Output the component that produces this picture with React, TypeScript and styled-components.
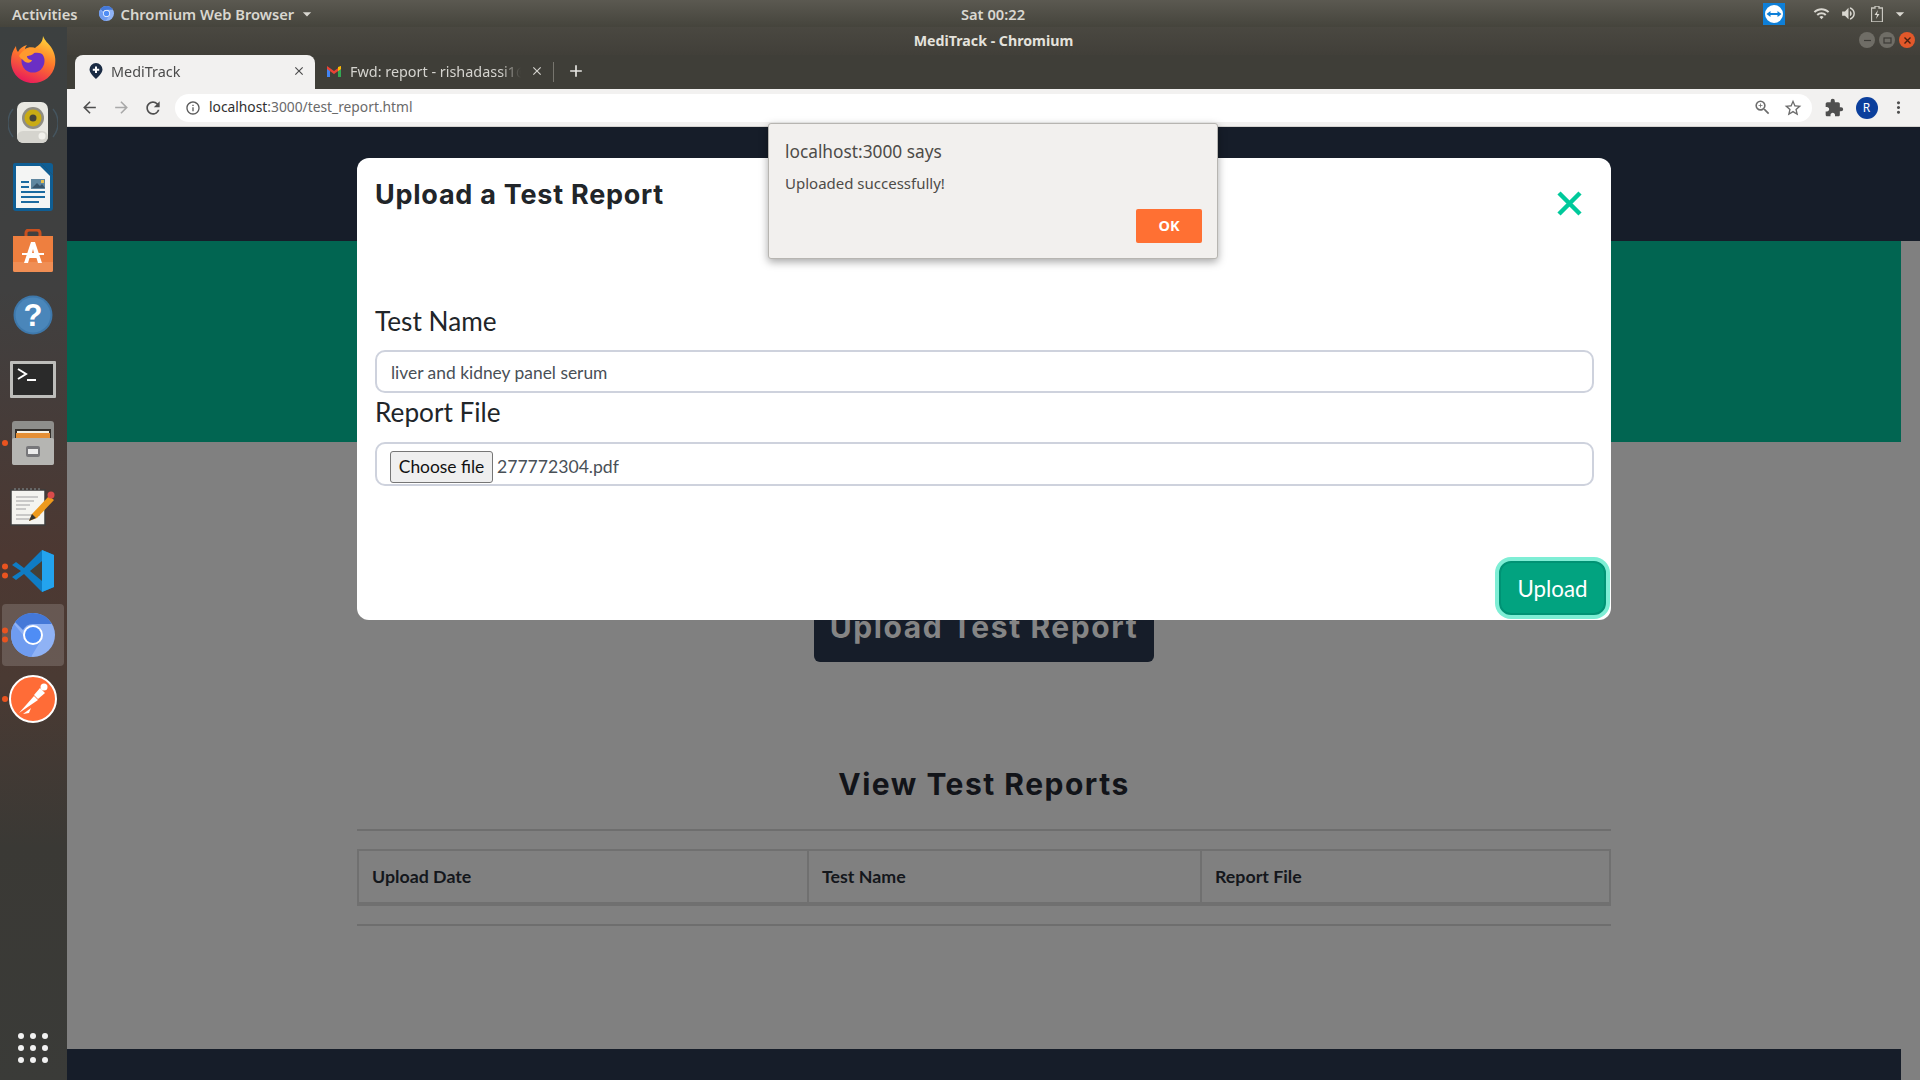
import styled, { createGlobalStyle } from "styled-components";
import {
  MdAdd,
  MdArrowBack,
  MdArrowDropDown,
  MdArrowForward,
  MdClose,
  MdExtension,
  MdInfoOutline,
  MdMoreVert,
  MdOutlineStarBorder,
  MdRefresh,
  MdVolumeUp,
  MdWifi,
  MdZoomIn,
} from "react-icons/md";

const GlobalStyle = createGlobalStyle`
  html, body, #root { margin: 0; height: 100%; }
  body { overflow: hidden; font-family: "Lato", sans-serif; }
  * { box-sizing: border-box; }
`;

const SYSTEM_FONT = `"Noto Sans", "Open Sans", sans-serif`;
const HEADING_FONT = `"Inter", "Open Sans", sans-serif`;

const Screen = styled.div`
  position: relative;
  width: 1920px;
  height: 1080px;
  display: flex;
  flex-direction: column;
  overflow: hidden;
`;

/* gnome top bar */
const TopBar = styled.div`
  height: 27px;
  flex: none;
  display: grid;
  grid-template-columns: 960px 66px 1fr;
  align-items: center;
  background: linear-gradient(#5b5951, #45443c);
  color: #d9d7d0;
  font: 600 14.7px ${SYSTEM_FONT};
`;

const TopLeft = styled.div`
  display: flex;
  align-items: center;
  padding-left: 12px;
  gap: 21px;
`;

const AppMenu = styled.span`
  display: flex;
  align-items: center;
  gap: 7px;
  & > svg:last-child { margin-left: -4px; }
`;

const Clock = styled.span`
  display: block;
  text-align: center;
  white-space: nowrap;
`;

const TopRight = styled.div`
  display: flex;
  align-items: center;
  justify-content: flex-end;
  padding-right: 10px;
`;

const TrayItem = styled.span<{ $gap: number }>`
  display: flex;
  margin-left: ${({ $gap }) => $gap}px;
`;

const Desktop = styled.div`
  flex: 1;
  display: flex;
  min-height: 0;
`;

/* dock */
const Dock = styled.nav`
  position: relative;
  width: 67px;
  flex: none;
  display: flex;
  flex-direction: column;
  background: linear-gradient(#3c4040 0%, #404040 25%, #4c3832 50%, #4a3a33 62%, #3a3935 78%, #3a3b38 100%);
`;

const DockSlot = styled.div<{ $active?: boolean }>`
  position: relative;
  height: 64px;
  padding-right: 1px;
  display: flex;
  align-items: center;
  justify-content: center;
  &::before {
    content: "";
    display: ${({ $active }) => ($active ? "block" : "none")};
    position: absolute;
    left: 2px;
    top: 1px;
    width: 62px;
    height: 62px;
    border-radius: 4px;
    background: rgba(255, 255, 255, 0.16);
  }
  & > svg { position: relative; }
`;

const RunDots = styled.div`
  position: absolute;
  left: 2px;
  top: 50%;
  transform: translateY(-50%);
  display: flex;
  flex-direction: column;
  gap: 3px;
`;

const RunDot = styled.i`
  display: block;
  width: 6px;
  height: 6px;
  border-radius: 50%;
  background: #e95420;
`;

const AppGrid = styled.div`
  position: absolute;
  left: 18px;
  bottom: 17px;
  display: grid;
  grid-template-columns: repeat(3, 6px);
  gap: 6px;
`;

const AppGridDot = styled.i`
  width: 6px;
  height: 6px;
  border-radius: 50%;
  background: #f2f2f2;
`;

/* browser */
const Browser = styled.div`
  flex: 1;
  min-width: 0;
  display: flex;
  flex-direction: column;
`;

const TitleBar = styled.div`
  position: relative;
  height: 28px;
  flex: none;
  padding-bottom: 2px;
  display: flex;
  align-items: center;
  justify-content: center;
  background: linear-gradient(#4a4841, #413f39);
  color: #e4e2dc;
  font: 700 14.2px ${SYSTEM_FONT};
`;

const WindowButtons = styled.div`
  position: absolute;
  right: 5px;
  top: 5px;
  display: flex;
  gap: 4px;
`;

const WindowButton = styled.span<{ $close?: boolean }>`
  width: 16px;
  height: 16px;
  border-radius: 50%;
  display: flex;
  align-items: center;
  justify-content: center;
  background: ${({ $close }) => ($close ? "#e2582a" : "#6f6d66")};
  color: ${({ $close }) => ($close ? "#4a2010" : "#3c3b36")};
`;

const TabStrip = styled.div`
  height: 34px;
  flex: none;
  display: flex;
  align-items: flex-end;
  background: #3f3e38;
  padding-left: 8px;
`;

const Tab = styled.div<{ $active?: boolean }>`
  width: ${({ $active }) => ($active ? "240px" : "238px")};
  height: 34px;
  display: flex;
  align-items: center;
  padding: 0 9px 2px ${({ $active }) => ($active ? "14px" : "12px")};
  gap: ${({ $active }) => ($active ? "8px" : "9px")};
  border-radius: 8px 8px 0 0;
  background: ${({ $active }) => ($active ? "#f2f1f0" : "transparent")};
  color: ${({ $active }) => ($active ? "#4b4b4b" : "#d5d4cf")};
  font: 400 14.4px ${SYSTEM_FONT};
`;

const TabTitle = styled.span`
  flex: 1;
  min-width: 0;
  overflow: hidden;
  white-space: nowrap;
  -webkit-mask-image: linear-gradient(90deg, #000 88%, transparent);
`;

const TabSeparator = styled.i`
  width: 1px;
  height: 20px;
  margin: 0 0 7px 0;
  background: #77756e;
`;

const NewTab = styled.span`
  width: 44px;
  height: 34px;
  padding-bottom: 2px;
  display: flex;
  align-items: center;
  justify-content: center;
  color: #e6e5e1;
`;

const Toolbar = styled.div`
  height: 38px;
  flex: none;
  display: flex;
  align-items: center;
  padding: 0 12px 0 6px;
  background: #f2f1f0;
  border-bottom: 1px solid #d5d3d0;
  color: #5a5a5a;
`;

const NavButton = styled.span<{ $muted?: boolean }>`
  width: 32px;
  display: flex;
  justify-content: center;
  color: ${({ $muted }) => ($muted ? "#a9a9a9" : "#4f4f4f")};
`;

const AddressBar = styled.div`
  width: 1637px;
  height: 28px;
  margin-left: 6px;
  padding: 0 9px 0 10px;
  display: flex;
  align-items: center;
  gap: 8px;
  border-radius: 14px;
  background: #fff;
  font: 400 13.8px ${SYSTEM_FONT};
`;

const UrlHost = styled.span`
  color: #2f2f2f;
`;

const UrlPath = styled.span`
  flex: 1;
  padding-bottom: 2px;
  color: #6a6a6a;
`;

const OmniIcons = styled.div`
  display: flex;
  align-items: center;
  gap: 11px;
  color: #6c6c6c;
`;

const ToolbarActions = styled.div`
  flex: 1;
  display: flex;
  align-items: center;
  justify-content: space-between;
  padding-left: 12px;
  color: #4f4f4f;
`;

const Avatar = styled.span`
  width: 22px;
  height: 22px;
  border-radius: 50%;
  display: flex;
  align-items: center;
  justify-content: center;
  background: #0b3f9c;
  color: #fff;
  font: 400 12px ${SYSTEM_FONT};
`;

/* page */
const Page = styled.main`
  position: relative;
  flex: 1;
  min-height: 0;
  display: flex;
  flex-direction: column;
  background: #808080;
  font-family: "Lato", sans-serif;
`;

const PageHeader = styled.header`
  height: 114px;
  flex: none;
  background: #161d29;
`;

const Hero = styled.section`
  width: 1834px;
  height: 201px;
  flex: none;
  background: #016551;
`;

const Content = styled.section`
  width: 1254px;
  margin-left: 290px;
  display: flex;
  flex-direction: column;
  align-items: center;
`;

const UploadTrigger = styled.button`
  width: 340px;
  height: 70px;
  margin-top: 150px;
  padding: 0;
  border: 0;
  border-radius: 6px;
  background: #161d29;
  color: #858585;
  font: 700 30px ${HEADING_FONT};
  letter-spacing: 1.6px;
`;

const SectionTitle = styled.h2`
  margin: 102px 0 0;
  height: 40px;
  color: #121419;
  font: 700 30px/40px ${HEADING_FONT};
  letter-spacing: 1.5px;
`;

const Rule = styled.hr<{ $gap: number }>`
  width: 100%;
  height: 2px;
  margin: ${({ $gap }) => $gap}px 0 0;
  border: 0;
  background: #6e6e6e;
`;

const ReportTable = styled.table`
  width: 100%;
  height: 57px;
  margin-top: 18px;
  table-layout: fixed;
  border-collapse: separate;
  border-spacing: 0;
  border: solid #707070;
  border-width: 2px 2px 4px;
`;

const HeaderCell = styled.th<{ $width?: number }>`
  width: ${({ $width }) => ($width ? `${$width}px` : "auto")};
  padding: 0 13px 2px;
  text-align: left;
  color: #14171c;
  font: 700 17.8px "Lato", sans-serif;
  border-right: 2px solid #707070;
  &:last-child { border-right: 0; }
`;

const PageFooter = styled.footer`
  width: 1834px;
  height: 31px;
  margin-top: auto;
  background: #161d29;
`;

/* modal */
const Modal = styled.div`
  position: absolute;
  left: 290px;
  top: 31px;
  width: 1254px;
  height: 462px;
  padding: 0 17px 0 18px;
  display: flex;
  flex-direction: column;
  border-radius: 12px;
  background: #fff;
`;

const ModalHeader = styled.div`
  display: flex;
  justify-content: space-between;
  align-items: flex-start;
  padding-top: 20px;
  height: 145px;
`;

const ModalTitle = styled.h3`
  margin: 0;
  color: #212529;
  font: 700 27px/34px ${HEADING_FONT};
  letter-spacing: 0.75px;
`;

const CloseIcon = styled.svg`
  margin: 13px 12px 0 0;
`;

const FieldLabel = styled.label<{ $top?: number; $gap: number }>`
  display: block;
  height: 36px;
  margin-top: ${({ $top }) => $top ?? 0}px;
  margin-bottom: ${({ $gap }) => $gap}px;
  color: #212529;
  font: 400 26.2px/36px "Lato", sans-serif;
`;

const TextField = styled.input`
  display: block;
  width: 100%;
  height: 43px;
  padding: 2px 14px 0;
  border: 2px solid #ced2dd;
  border-radius: 10px;
  outline: none;
  color: #495057;
  font: 400 17.4px "Lato", sans-serif;
`;

const FileField = styled.div`
  width: 100%;
  height: 44px;
  padding: 5px 13px 0;
  display: flex;
  align-items: center;
  gap: 4px;
  border: 2px solid #ced2dd;
  border-radius: 10px;
  color: #495057;
  font: 400 17.6px "Lato", sans-serif;
`;

const ChooseFile = styled.button`
  width: 103px;
  height: 32px;
  padding: 0;
  border: 1px solid #767676;
  border-radius: 3px;
  background: #efefef;
  color: #111;
  font: 400 17.4px "Lato", sans-serif;
`;

const SubmitButton = styled.button`
  width: 107px;
  height: 54px;
  margin: auto -12px 5px 0;
  padding: 1px 0 0;
  align-self: flex-end;
  border: 2px solid #009274;
  border-radius: 12px;
  background: #02a380;
  box-shadow: 0 0 0 4px #7eeed5;
  color: #fff;
  font: 400 22.3px "Lato", sans-serif;
`;

/* js alert */
const AlertBox = styled.div`
  position: absolute;
  left: 768px;
  top: 123px;
  width: 450px;
  height: 136px;
  padding: 16px 15px 15px 16px;
  display: flex;
  flex-direction: column;
  border: 1px solid #b7b5b1;
  border-radius: 3px;
  background: #f2f0ee;
  box-shadow: 0 3px 8px rgba(0, 0, 0, 0.35);
  color: #4d4b48;
  font-family: ${SYSTEM_FONT};
`;

const AlertTitle = styled.div`
  font-size: 17.3px;
  line-height: 24px;
`;

const AlertMessage = styled.div`
  margin-top: 8px;
  font-size: 15px;
  line-height: 22px;
`;

const AlertOk = styled.button`
  width: 66px;
  height: 34px;
  margin-top: auto;
  align-self: flex-end;
  padding: 0 0 2px;
  border: 0;
  border-radius: 2px;
  background: #ff7033;
  color: #fff;
  font: 700 14.5px ${SYSTEM_FONT};
`;

function Firefox() {
  return (
    <svg width="46" height="48" viewBox="0 0 46 48">
      <defs>
        <linearGradient id="ffa" x1="0.7" y1="0" x2="0.3" y2="1">
          <stop offset="0" stopColor="#ffd43a" />
          <stop offset="0.45" stopColor="#ff7a2a" />
          <stop offset="1" stopColor="#e8175d" />
        </linearGradient>
      </defs>
      <path d="M33 1c2 5 5 7 8 11 4 6 5 12 4 18-2 11-11 18-22 18C10 48 1 38 1 26 1 20 3 15 6 11c0 3 1 5 2 6 2-4 5-6 9-7-1 1-2 3-2 4 3-2 7-2 10-1 4-3 8-6 8-12z" fill="url(#ffa)" />
      <circle cx="23" cy="26" r="11.5" fill="#6b2fc4" />
      <path d="M9 21c3-6 10-9 16-8 5 1 9 4 10 8-3-3-7-4-11-3-1 2-5 3-7 3 0 3 3 4 5 4-1 4-7 3-9 0-1-1-3-2-4-4z" fill="#ff9a2e" />
    </svg>
  );
}

function Speaker() {
  return (
    <svg width="50" height="44" viewBox="0 0 50 44">
      <path d="M5 8a22 22 0 0 0 0 28M45 8a22 22 0 0 1 0 28" fill="none" stroke="#4d6a7d" strokeWidth="1.500" opacity="0.5" />
      <rect x="9" y="1" width="31" height="41" rx="7" fill="#e9e8e2" />
      <rect x="9" y="30" width="31" height="12" rx="6" fill="#d5d4ce" />
      <circle cx="25" cy="17" r="11" fill="#8f8d83" />
      <circle cx="25" cy="17" r="8.500" fill="#c9ab14" />
      <circle cx="25" cy="17" r="3.500" fill="#45433a" />
      <circle cx="34" cy="35" r="3.500" fill="#f2f1ec" />
    </svg>
  );
}

function Writer() {
  return (
    <svg width="40" height="48" viewBox="0 0 40 48">
      <path d="M2 0h26l12 12v33a3 3 0 0 1-3 3H3a3 3 0 0 1-3-3V2a2 2 0 0 1 2-2z" fill="#0f5e94" />
      <path d="M3 3h24l10 10v32H3z" fill="#f4f5f4" />
      <path d="M28 0h9a3 3 0 0 1 3 3v9z" fill="#0f5e94" />
      <path d="M8 18h8v2H8zM8 23h8v2H8zM8 28h24v2H8zM8 33h24v2H8zM8 38h18v2H8z" fill="#1b6aa0" />
      <rect x="18" y="16" width="14" height="10" fill="#5f87a0" />
      <path d="M19 25l5-5 3 3 2-2 3 4z" fill="#36546b" />
      <rect x="28" y="17" width="3" height="3" fill="#e7c04d" />
    </svg>
  );
}

function Store() {
  return (
    <svg width="42" height="44" viewBox="0 0 42 44">
      <path d="M14 10V4a3 3 0 0 1 3-3h8a3 3 0 0 1 3 3v6" fill="none" stroke="#c9501f" strokeWidth="3" />
      <path d="M1 7h40v34a2 2 0 0 1-2 2H3a2 2 0 0 1-2-2z" fill="#ee7f3f" />
      <path d="M1 33h40v8a2 2 0 0 1-2 2H3a2 2 0 0 1-2-2z" fill="#f08e54" />
      <path d="M19 13h4l7 21h-4l-1.500-5h-7L16 34h-4zM20 24h2l-1-4z" fill="#fff" />
      <rect x="10" y="24" width="22" height="2" fill="#fff" />
    </svg>
  );
}

function Help() {
  return (
    <svg width="40" height="40" viewBox="0 0 40 40">
      <circle cx="20" cy="20" r="19.500" fill="#3e78ab" />
      <circle cx="20" cy="20" r="17.500" fill="#4a86ba" />
      <text x="20" y="31" textAnchor="middle" fill="#fff" fontFamily="Liberation Sans, sans-serif" fontWeight="700" fontSize="31">?</text>
    </svg>
  );
}

function Terminal() {
  return (
    <svg width="46" height="37" viewBox="0 0 46 37">
      <rect width="46" height="37" rx="1" fill="#bdbdba" />
      <rect x="3" y="3" width="40" height="31" fill="#2a2a2a" />
      <path d="M8 8l8 5-8 5" fill="none" stroke="#fff" strokeWidth="2" />
      <path d="M17 19h9" stroke="#fff" strokeWidth="2" />
    </svg>
  );
}

function Files() {
  return (
    <svg width="42" height="44" viewBox="0 0 42 44">
      <rect width="42" height="44" rx="3" fill="#8e8e8b" />
      <rect x="3" y="8" width="36" height="12" fill="#34302c" />
      <rect x="5" y="10" width="32" height="2" fill="#f4f0e4" />
      <rect x="4" y="12" width="34" height="5" fill="#e58f35" />
      <rect x="0" y="17" width="42" height="27" rx="2" fill="#b5b5b2" />
      <rect x="14" y="25" width="14" height="11" rx="2" fill="#77777a" />
      <rect x="16" y="28" width="10" height="5" fill="#ececec" />
    </svg>
  );
}

function Gedit() {
  return (
    <svg width="46" height="38" viewBox="0 0 46 38">
      <rect x="1" y="2" width="34" height="35" fill="#f4f4f0" stroke="#3d3d3d" strokeWidth="1.500" />
      <path d="M5 2v-2M9 2v-2M13 2v-2M17 2v-2M21 2v-2M25 2v-2M29 2v-2" stroke="#666" strokeWidth="2" />
      <path d="M6 9h22M6 13h18M6 17h14M6 21h10M6 27h24M6 31h14" stroke="#bbb" strokeWidth="1.500" />
      <path d="M19 33l3-7 17-18 5 4-17 18z" fill="#ee9a1c" />
      <path d="M19 33l3-7 4 4z" fill="#333" />
      <circle cx="41" cy="7" r="3.500" fill="#d94b4b" />
    </svg>
  );
}

function VsCode() {
  return (
    <svg width="42" height="42" viewBox="0 0 42 42">
      <path d="M30 0l12 5v32l-12 5L12 24l-8 6-4-3 9-6-9-6 4-3 8 6z" fill="#0f7cc4" />
      <path d="M30 0l12 5v32l-12 5z" fill="#23a3ee" />
      <path d="M30 11L18 21l12 10z" fill="#444038" />
    </svg>
  );
}

function Chromium({ size }: { size: number }) {
  return (
    <svg width={size} height={size} viewBox="0 0 44 44">
      <circle cx="22" cy="22" r="22" fill="#8fb2f5" />
      <path d="M22 0a22 22 0 0 1 19 11H22a11 11 0 0 0-10 6L4 9a22 22 0 0 1 18-9z" fill="#4478d8" />
      <path d="M3 11a22 22 0 0 0 17 33l9-15a11 11 0 0 1-16-6z" fill="#6f9cf0" />
      <circle cx="22" cy="22" r="10" fill="#fff" />
      <circle cx="22" cy="22" r="8" fill="#4f8df5" />
    </svg>
  );
}

function Postman() {
  return (
    <svg width="48" height="48" viewBox="0 0 48 48">
      <circle cx="24" cy="24" r="23" fill="#ff6c37" stroke="#fff" strokeWidth="2" />
      <path d="M10 38l15-17 4 4z" fill="#fff" />
      <path d="M25 20l6-7 5 5-7 6z" fill="#fff" />
      <circle cx="35" cy="12" r="3.500" fill="#fff" />
      <path d="M14 39l6-1 2-5z" fill="#fff" />
    </svg>
  );
}

function TabFavicon() {
  return (
    <svg width="14" height="16" viewBox="0 0 14 16">
      <path d="M7 0a6.500 6.500 0 0 1 6.500 6.500C13.500 10.500 7 16 7 16S.5 10.500.5 6.500A6.500 6.500 0 0 1 7 0z" fill="#1b2c44" />
      <path d="M6 3.500h2V5.700h2.200v2H8v2.200H6V7.700H3.800v-2H6z" fill="#fff" />
    </svg>
  );
}

function GmailIcon() {
  return (
    <svg width="14" height="12" viewBox="0 0 14 12">
      <path d="M0 2v10h3V5z" fill="#4285f4" />
      <path d="M14 2v10h-3V5z" fill="#34a853" />
      <path d="M0 1l7 5 7-5v3L7 9 0 4z" fill="#ea4335" />
      <path d="M11 2l3-1v3l-3 2z" fill="#fbbc04" />
    </svg>
  );
}

function TeamViewer() {
  return (
    <svg width="22" height="22" viewBox="0 0 22 22">
      <rect width="22" height="22" fill="#0e7fd8" />
      <circle cx="11" cy="11" r="9" fill="#fff" />
      <path d="M3.500 11l4-3v2h7V8l4 3-4 3v-2h-7v2z" fill="#0e7fd8" />
    </svg>
  );
}

function Battery() {
  return (
    <svg width="12" height="16" viewBox="0 0 12 16">
      <path d="M4 0h4v2h3.500v14H.5V2H4z" fill="none" stroke="#c9c7c0" strokeWidth="1.300" />
      <path d="M7 4L3.500 9H6l-1 4 3.500-5H6z" fill="#d9d7d0" />
    </svg>
  );
}

const dockApps = [
  { key: "firefox", icon: <Firefox />, dots: 0 },
  { key: "speaker", icon: <Speaker />, dots: 0 },
  { key: "writer", icon: <Writer />, dots: 0 },
  { key: "store", icon: <Store />, dots: 0 },
  { key: "help", icon: <Help />, dots: 0 },
  { key: "terminal", icon: <Terminal />, dots: 0 },
  { key: "files", icon: <Files />, dots: 1 },
  { key: "gedit", icon: <Gedit />, dots: 0 },
  { key: "vscode", icon: <VsCode />, dots: 2 },
  { key: "chromium", icon: <Chromium size={44} />, dots: 2, active: true },
  { key: "postman", icon: <Postman />, dots: 1 },
];

export default function App() {
  return (
    <Screen>
      <GlobalStyle />
      <TopBar>
        <TopLeft>
          <span>Activities</span>
          <AppMenu>
            <Chromium size={15} />
            Chromium Web Browser
            <MdArrowDropDown size={20} />
          </AppMenu>
        </TopLeft>
        <Clock>Sat 00:22</Clock>
        <TopRight>
          <TeamViewer />
          <TrayItem $gap={28}><MdWifi size={17} /></TrayItem>
          <TrayItem $gap={10}><MdVolumeUp size={17} /></TrayItem>
          <TrayItem $gap={14}><Battery /></TrayItem>
          <TrayItem $gap={7}><MdArrowDropDown size={20} /></TrayItem>
        </TopRight>
      </TopBar>

      <Desktop>
        <Dock>
          {dockApps.map((app) => (
            <DockSlot key={app.key} $active={app.active}>
              {app.dots > 0 && (
                <RunDots>
                  {Array.from({ length: app.dots }).map((_, i) => (
                    <RunDot key={i} />
                  ))}
                </RunDots>
              )}
              {app.icon}
            </DockSlot>
          ))}
          <AppGrid>
            {Array.from({ length: 9 }).map((_, i) => (
              <AppGridDot key={i} />
            ))}
          </AppGrid>
        </Dock>

        <Browser>
          <TitleBar>
            MediTrack - Chromium
            <WindowButtons>
              <WindowButton>
                <svg width="9" height="9" viewBox="0 0 9 9"><path d="M1 4.500h7" stroke="currentColor" strokeWidth="1.200" /></svg>
              </WindowButton>
              <WindowButton>
                <svg width="9" height="9" viewBox="0 0 9 9"><rect x="1" y="2" width="7" height="5" fill="none" stroke="currentColor" strokeWidth="1.200" /></svg>
              </WindowButton>
              <WindowButton $close>
                <svg width="9" height="9" viewBox="0 0 9 9"><path d="M1.500 1.500l6 6M7.500 1.500l-6 6" stroke="currentColor" strokeWidth="1.400" /></svg>
              </WindowButton>
            </WindowButtons>
          </TitleBar>

          <TabStrip>
            <Tab $active>
              <TabFavicon />
              <TabTitle>MediTrack</TabTitle>
              <MdClose size={14} />
            </Tab>
            <Tab>
              <GmailIcon />
              <TabTitle>Fwd: report - rishadassi1@</TabTitle>
              <MdClose size={14} />
            </Tab>
            <TabSeparator />
            <NewTab>
              <MdAdd size={20} />
            </NewTab>
          </TabStrip>

          <Toolbar>
            <NavButton><MdArrowBack size={19} /></NavButton>
            <NavButton $muted><MdArrowForward size={19} /></NavButton>
            <NavButton><MdRefresh size={20} /></NavButton>
            <AddressBar>
              <MdInfoOutline size={16} />
              <UrlPath>
                <UrlHost>localhost</UrlHost>:3000/test_report.html
              </UrlPath>
              <OmniIcons>
                <MdZoomIn size={19} />
                <MdOutlineStarBorder size={20} />
              </OmniIcons>
            </AddressBar>
            <ToolbarActions>
              <MdExtension size={20} />
              <Avatar>R</Avatar>
              <MdMoreVert size={19} />
            </ToolbarActions>
          </Toolbar>

          <Page>
            <PageHeader />
            <Hero />
            <Content>
              <UploadTrigger>Upload Test Report</UploadTrigger>
              <SectionTitle>View Test Reports</SectionTitle>
              <Rule $gap={25} />
              <ReportTable>
                <thead>
                  <tr>
                    <HeaderCell $width={450}>Upload Date</HeaderCell>
                    <HeaderCell $width={393}>Test Name</HeaderCell>
                    <HeaderCell>Report File</HeaderCell>
                  </tr>
                </thead>
              </ReportTable>
              <Rule $gap={18} />
            </Content>
            <PageFooter />

            <Modal>
              <ModalHeader>
                <ModalTitle>Upload a Test Report</ModalTitle>
                <CloseIcon width="25" height="25" viewBox="0 0 25 25">
                  <path d="M2 2l21 21M23 2L2 23" stroke="#00c99b" strokeWidth="4.500" />
                </CloseIcon>
              </ModalHeader>
              <FieldLabel $gap={11}>Test Name</FieldLabel>
              <TextField readOnly value="liver and kidney panel serum" />
              <FieldLabel $gap={12} $top={1}>Report File</FieldLabel>
              <FileField>
                <ChooseFile>Choose file</ChooseFile>
                <span>277772304.pdf</span>
              </FileField>
              <SubmitButton>Upload</SubmitButton>
            </Modal>
          </Page>
        </Browser>
      </Desktop>

      <AlertBox>
        <AlertTitle>localhost:3000 says</AlertTitle>
        <AlertMessage>Uploaded successfully!</AlertMessage>
        <AlertOk>OK</AlertOk>
      </AlertBox>
    </Screen>
  );
}
